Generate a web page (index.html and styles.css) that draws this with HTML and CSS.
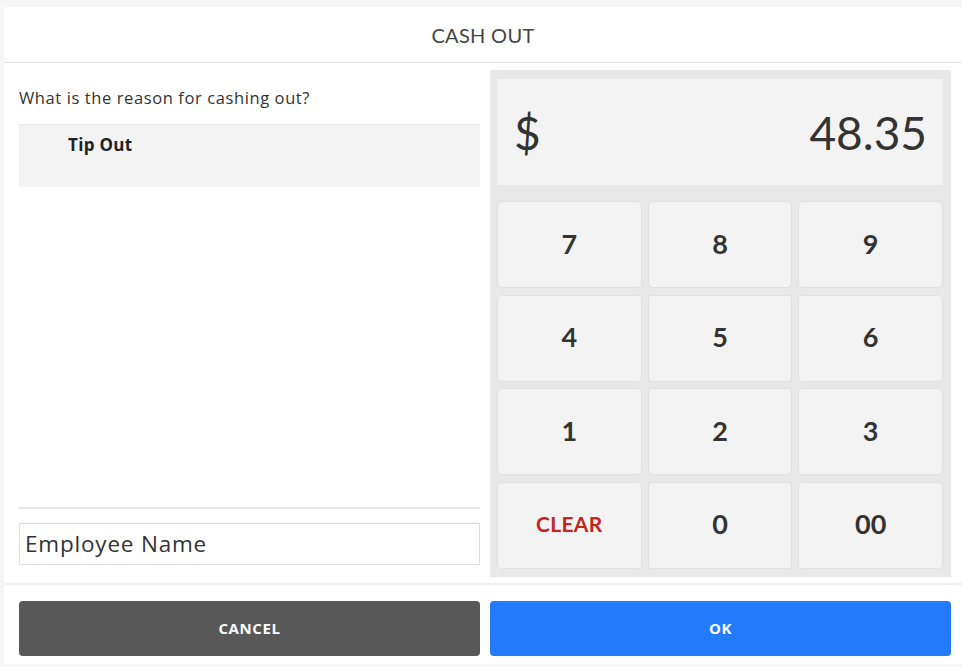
FILE: index.html
```html
<!DOCTYPE html>
<html>
<head>
<meta charset="utf-8">
<link rel="stylesheet" href="styles.css">
</head>
<body>
<div class="app">
  <header class="header">CASH OUT</header>
  <main class="main">
    <section class="left">
      <div class="question">What is the reason for cashing out?</div>
      <div class="reason">Tip Out</div>
      <div class="spacer"></div>
      <div class="divider"></div>
      <div class="name-input">Employee Name</div>
    </section>
    <section class="pad">
      <div class="display">
        <span class="currency">$</span>
        <span class="amount">48.35</span>
      </div>
      <div class="keys">
        <div class="key">7</div>
        <div class="key">8</div>
        <div class="key">9</div>
        <div class="key">4</div>
        <div class="key">5</div>
        <div class="key">6</div>
        <div class="key">1</div>
        <div class="key">2</div>
        <div class="key">3</div>
        <div class="key key-clear">CLEAR</div>
        <div class="key">0</div>
        <div class="key">00</div>
      </div>
    </section>
  </main>
  <footer class="footer">
    <div class="btn btn-cancel">CANCEL</div>
    <div class="btn btn-ok">OK</div>
  </footer>
</div>
</body>
</html>
```

FILE: styles.css
```css
html, body {
  margin: 0;
  padding: 0;
}
body {
  background: #f6f6f6;
  font-family: "Open Sans", "Lato", sans-serif;
  color: #333;
  width: 962px;
  height: 667px;
  overflow: hidden;
}
.app {
  margin: 7px 0 0 4px;
  background: #fff;
  height: 657px;
  display: flex;
  flex-direction: column;
}
.header {
  height: 56px;
  border-bottom: 1px solid #e3e3e3;
  display: flex;
  align-items: center;
  justify-content: center;
  font-family: "Lato", sans-serif;
  font-size: 20px;
  font-weight: 400;
  color: #444;
  letter-spacing: 0.3px;
  padding-top: 1px;
  box-sizing: border-box;
}
.main {
  display: flex;
  gap: 10px;
  padding: 7px 11px 6px 15px;
  border-bottom: 2px solid #f0f0f0;
}
.left {
  width: 461px;
  display: flex;
  flex-direction: column;
}
.question {
  font-size: 16.5px;
  letter-spacing: 0.6px;
  line-height: 20px;
  margin-top: 18px;
  color: #333;
}
.reason {
  margin-top: 16px;
  height: 63px;
  background: #f3f3f3;
  border-top: 1px solid #e6e6e6;
  padding: 8px 0 0 49px;
  box-sizing: border-box;
  font-size: 17px;
  letter-spacing: 0.3px;
  font-weight: 700;
  color: #222;
}
.spacer {
  flex: 1;
}
.divider {
  height: 2px;
  background: #e8e8e8;
}
.name-input {
  margin-top: 14px;
  margin-bottom: 12px;
  height: 42px;
  box-sizing: border-box;
  border: 1px solid #e0e0e0;
  border-top-color: #d4d4d4;
  padding-left: 5px;
  display: flex;
  align-items: center;
  font-size: 22.5px;
  letter-spacing: 0.8px;
  color: #333;
}
.pad {
  width: 461px;
  background: #e8e8e8;
  padding: 9px 8px 8px 7px;
  box-sizing: border-box;
}
.display {
  height: 106px;
  background: #f3f3f3;
  display: flex;
  align-items: center;
  justify-content: space-between;
  padding: 0 16px 0 17px;
  font-family: "Lato", sans-serif;
  font-size: 46px;
  color: #333;
}
.keys {
  margin-top: 16px;
  display: grid;
  grid-template-columns: repeat(3, 1fr);
  grid-auto-rows: 87px;
  gap: 6.5px 6px;
}
.key {
  background: #f3f3f3;
  border: 1px solid #e0e0e0;
  border-radius: 4px;
  display: flex;
  align-items: center;
  justify-content: center;
  font-family: "Lato", sans-serif;
  font-size: 27px;
  font-weight: 700;
  color: #333;
  padding-bottom: 3px;
  box-sizing: border-box;
}
.key-clear {
  font-size: 21px;
  color: #c4261d;
  letter-spacing: 0.3px;
}
.footer {
  display: flex;
  gap: 10px;
  padding: 16px 11px 0 15px;
}
.btn {
  width: 461px;
  height: 55px;
  border-radius: 4px;
  display: flex;
  align-items: center;
  justify-content: center;
  color: #fff;
  font-size: 15px;
  letter-spacing: 0.6px;
  font-weight: 700;
}
.btn-cancel {
  background: #585858;
}
.btn-ok {
  background: #237bfb;
}
```
